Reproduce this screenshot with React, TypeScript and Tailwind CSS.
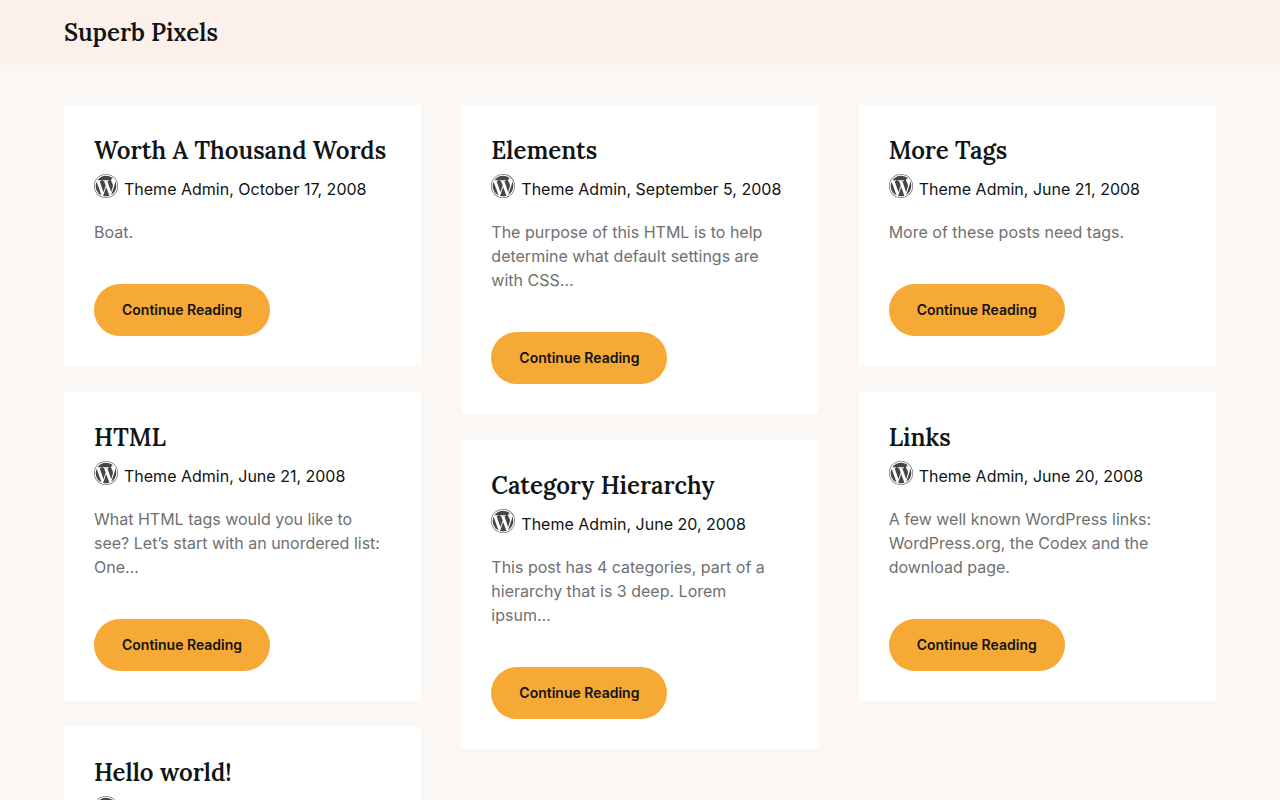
type Post = {
  title: string
  date: string
  excerpt: string
}

// One list per masonry column
const columns: Post[][] = [
  [
    { title: "Worth A Thousand Words", date: "October 17, 2008", excerpt: "Boat." },
    {
      title: "HTML",
      date: "June 21, 2008",
      excerpt: "What HTML tags would you like to see? Let’s start with an unordered list: One…",
    },
    {
      title: "Hello world!",
      date: "June 20, 2008",
      excerpt: "Welcome to WordPress. This is your first post.",
    },
  ],
  [
    {
      title: "Elements",
      date: "September 5, 2008",
      excerpt: "The purpose of this HTML is to help determine what default settings are with CSS…",
    },
    {
      title: "Category Hierarchy",
      date: "June 20, 2008",
      excerpt: "This post has 4 categories, part of a hierarchy that is 3 deep. Lorem ipsum…",
    },
  ],
  [
    { title: "More Tags", date: "June 21, 2008", excerpt: "More of these posts need tags." },
    {
      title: "Links",
      date: "June 20, 2008",
      excerpt: "A few well known WordPress links: WordPress.org, the Codex and the download page.",
    },
  ],
]

function Avatar() {
  return (
    <svg viewBox="8 8 496 496" className="size-6 shrink-0 fill-[#464646]" aria-hidden="true">
      <path d="M61.7 169.4l101.5 278C92.2 413 43.3 340.2 43.3 256c0-30.9 6.6-60.1 18.4-86.6zm337.9 75.9c0-26.3-9.4-44.5-17.5-58.7-10.8-17.5-20.9-32.4-20.9-49.9 0-19.6 14.8-37.8 35.7-37.8.9 0 1.8.1 2.8.2-37.9-34.7-88.3-55.9-143.7-55.9-74.3 0-139.7 38.1-177.8 95.9 5 .2 9.7.3 13.7.3 22.2 0 56.7-2.7 56.7-2.7 11.5-.7 12.8 16.2 1.4 17.5 0 0-11.5 1.3-24.3 2l77.5 230.4L249.8 247l-33.1-90.8c-11.5-.7-22.3-2-22.3-2-11.5-.7-10.1-18.2 1.3-17.5 0 0 35.1 2.7 56 2.7 22.2 0 56.7-2.7 56.7-2.7 11.5-.7 12.8 16.2 1.4 17.5 0 0-11.5 1.3-24.3 2l76.9 228.7 21.2-70.9c9-29.4 16-50.5 16-68.7zm-139.9 29.3l-63.8 185.5c19.1 5.6 39.2 8.7 60.1 8.7 24.8 0 48.5-4.3 70.6-12.1-.6-.9-1.1-1.9-1.5-2.9l-65.4-179.2zm183-120.7c.9 6.8 1.4 14 1.4 21.9 0 21.6-4 45.8-16.2 76.2l-65 187.9C426.2 403 468.7 334.5 468.7 256c0-37-9.4-71.8-26-102.1zM504 256c0 136.8-111.3 248-248 248C119.2 504 8 392.7 8 256 8 119.2 119.2 8 256 8c136.7 0 248 111.2 248 248zm-11.4 0c0-130.5-106.2-236.6-236.6-236.6C125.5 19.4 19.4 125.5 19.4 256S125.6 492.6 256 492.6c130.5 0 236.6-106.1 236.6-236.6z" />
    </svg>
  )
}

function Header() {
  return (
    <header className="bg-[#fcf0eb]">
      <div className="mx-auto w-[90%] py-4">
        <a
          href="#"
          className="block font-['Lora','Liberation_Serif',serif] text-2xl leading-[33px] font-semibold"
        >
          Superb Pixels
        </a>
      </div>
    </header>
  )
}

function PostCard({ post }: { post: Post }) {
  return (
    <article className="bg-white p-[30px]">
      <h2 className="font-['Lora','Liberation_Serif',serif] text-2xl leading-[31px] font-semibold">
        <a href="#">{post.title}</a>
      </h2>
      <div className="mt-2 flex items-start gap-1.5">
        <Avatar />
        <span className="leading-[30px]">Theme Admin, {post.date}</span>
      </div>
      <p className="mt-4 text-[#707070]">{post.excerpt}</p>
      <a
        href="#"
        className="mt-10 inline-block rounded-full bg-[#f6a935] px-7 py-4 align-top text-sm leading-5 font-semibold"
      >
        Continue Reading
      </a>
    </article>
  )
}

export default function App() {
  return (
    <div className="min-h-screen bg-[#fbf7f4] font-['Inter',sans-serif] text-base text-[#101414]">
      <Header />
      <main className="mx-auto grid w-[90%] grid-cols-1 items-start gap-x-10 gap-y-[26px] py-10 md:grid-cols-2 lg:grid-cols-3">
        {columns.map((posts, i) => (
          <div key={i} className="flex flex-col gap-[26px]">
            {posts.map((post) => (
              <PostCard key={post.title} post={post} />
            ))}
          </div>
        ))}
      </main>
    </div>
  )
}
